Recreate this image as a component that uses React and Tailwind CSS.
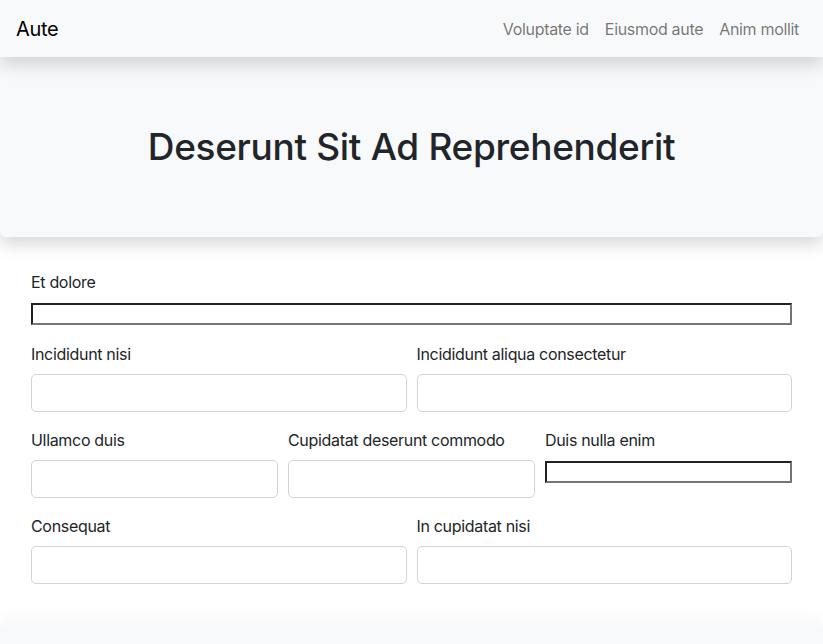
import React from 'react';

function Field({ label, native }) {
  return (
    <div className="flex flex-col min-w-0">
      <label className="mb-2 leading-6">{label}</label>
      {native ? (
        <input className="mt-px h-[22px] w-full bg-white border-2 border-t-[#222] border-l-[#222] border-b-[#767676] border-r-[#767676]" />
      ) : (
        <input className="h-[38px] w-full bg-white border border-[#ced4da] rounded-[5px]" />
      )}
    </div>
  );
}

export default function App() {
  return (
    <div className="min-h-[644px] bg-white text-[16px] tracking-[-0.02em] text-[#212529] flex flex-col" style={{ fontFamily: 'Inter, "Liberation Sans", sans-serif' }}>
      <nav className="relative z-20 h-[57px] bg-[#f8f9fa] flex items-center justify-between pl-4 pr-6 shadow-[0_8px_16px_rgba(0,0,0,0.15)]">
        <span className="text-[20px] text-black">Aute</span>
        <div className="flex text-black/55">
          <a className="px-2">Voluptate id</a>
          <a className="px-2">Eiusmod aute</a>
          <a className="pl-2">Anim mollit</a>
        </div>
      </nav>
      <header className="relative z-10 h-[180px] bg-[#f8f9fa] flex items-center justify-center rounded-b-[6px] shadow-[0_8px_16px_rgba(0,0,0,0.15)]">
        <h1 className="text-[37px] font-medium leading-tight">Deserunt Sit Ad Reprehenderit</h1>
      </header>
      <main className="px-[31px] pt-[33px] pb-[41px] flex flex-col gap-4">
        <div className="mb-px">
          <Field label="Et dolore" native />
        </div>
        <div className="grid grid-cols-2 gap-[10px]">
          <Field label="Incididunt nisi" />
          <Field label="Incididunt aliqua consectetur" />
        </div>
        <div className="grid grid-cols-3 gap-[10px] items-start">
          <Field label="Ullamco duis" />
          <Field label="Cupidatat deserunt commodo" />
          <Field label="Duis nulla enim" native />
        </div>
        <div className="grid grid-cols-2 gap-[10px]">
          <Field label="Consequat" />
          <Field label="In cupidatat nisi" />
        </div>
      </main>
      <footer className="flex-1 min-h-[20px] bg-[#f8f9fa] shadow-[0_-8px_16px_rgba(0,0,0,0.03)]" />
    </div>
  );
}
